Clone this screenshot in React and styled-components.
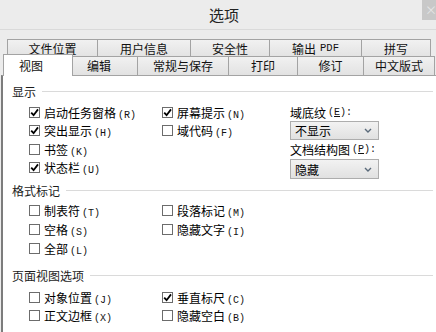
import React from "react";
import styled, { createGlobalStyle } from "styled-components";

const GlobalStyle = createGlobalStyle`
  html, body {
    margin: 0;
    padding: 0;
    background: #fff;
  }
  body {
    font-family: "Noto Sans CJK SC", "Liberation Sans", sans-serif;
  }
`;

const Window = styled.div`
  width: 436px;
  height: 332px;
  overflow: hidden;
  background: #ececec;
  display: flex;
  flex-direction: column;
  font-size: 12px;
  color: #000;
`;

const TitleBar = styled.div`
  height: 29px;
  flex: none;
  display: flex;
  align-items: flex-start;
  border-bottom: 1px solid #dadada;
`;

const Title = styled.div`
  flex: 1;
  padding-left: 26px;
  text-align: center;
  line-height: 29px;
  font-size: 15px;
  color: #222;
`;

const CloseBtn = styled.div`
  width: 14px;
  height: 20px;
  background: #c8c8c8;
  color: #e6e6e6;
  font-size: 12px;
  line-height: 20px;
  text-indent: 3px;
  overflow: hidden;
`;

const TabArea = styled.div`
  flex: none;
  padding-top: 9px;
  display: flex;
  flex-direction: column;
`;

const TabRow = styled.div`
  display: flex;
  height: ${(p) => p.$height}px;
  padding-left: ${(p) => p.$indent}px;
  margin-top: ${(p) => p.$top || 0}px;
`;

const Tab = styled.div`
  box-sizing: border-box;
  width: ${(p) => p.$width}px;
  display: flex;
  align-items: center;
  justify-content: center;
  padding-right: ${(p) => p.$shift || 0}px;
  border: 1px solid #a3a3a3;
  border-right: none;
  border-bottom: none;
  background: linear-gradient(#f1f1f1, #e2e2e2);
  font-size: 12px;
  line-height: 1;
  color: #111;

  &:last-child {
    border-right: 1px solid #a3a3a3;
  }

  ${(p) =>
    p.$active &&
    `
    position: relative;
    z-index: 2;
    margin-top: -2px;
    margin-bottom: -1px;
    background: #fff;
    border-right: 1px solid #a3a3a3;
    margin-right: -1px;
  `}
`;

const Latin = styled.span`
  font-family: "Liberation Mono", monospace;
  font-size: 10.5px;
  margin-left: 4px;
`;

const Panel = styled.div`
  flex: 1;
  margin-left: 1px;
  background: #fff;
  border-top: 1px solid #a3a3a3;
  border-left: 2px solid #7c7c7c;
  padding: 7px 3px 0 9px;
`;

const GroupHeader = styled.div`
  display: flex;
  align-items: center;
  gap: 6px;
  height: 16px;
  margin-top: ${(p) => p.$top || 0}px;
  color: #1c1c1c;
  font-size: 12px;
`;

const Rule = styled.div`
  flex: 1;
  height: 1px;
  background: #dadada;
`;

const Columns = styled.div`
  display: flex;
  margin-left: 17px;
  margin-top: ${(p) => p.$top}px;
`;

const Column = styled.div`
  width: ${(p) => (p.$width ? `${p.$width}px` : "auto")};
  flex: ${(p) => (p.$width ? "none" : 1)};
  display: flex;
  flex-direction: column;
`;

const CheckRow = styled.div`
  display: flex;
  align-items: center;
  gap: 4px;
  height: ${(p) => p.$height}px;
  white-space: nowrap;
  font-size: 12px;
`;

const Box = styled.div`
  box-sizing: border-box;
  width: 11px;
  height: 11px;
  border: 1px solid #6c6c6c;
  background: #fff;
  display: flex;
  align-items: center;
  justify-content: center;
`;

const Key = styled.span`
  font-family: "Liberation Mono", monospace;
  font-size: 10px;
  margin-left: 2px;
  color: #111;

  u {
    text-decoration: underline;
  }
`;

const FieldLabel = styled.div`
  height: ${(p) => p.$height}px;
  display: flex;
  align-items: center;
  white-space: nowrap;
`;

const Select = styled.div`
  box-sizing: border-box;
  width: 89px;
  height: ${(p) => p.$height}px;
  border: 1px solid #adadad;
  background: linear-gradient(#f2f2f2, #e1e1e1);
  display: flex;
  align-items: center;
  justify-content: space-between;
  padding: 0 6px 0 4px;
`;

const Check = () => (
  <svg width="9" height="9" viewBox="0 0 9 9">
    <path d="M1.2 4.6 L3.6 7.2 L8 1.4" fill="none" stroke="#000" strokeWidth="1.8" />
  </svg>
);

const Chevron = () => (
  <svg width="8" height="5" viewBox="0 0 8 5">
    <path d="M1 1 L4 4 L7 1" fill="none" stroke="#5a6a7a" strokeWidth="1.4" />
  </svg>
);

const Option = ({ label, k, checked, height }) => (
  <CheckRow $height={height}>
    <Box>{checked && <Check />}</Box>
    <span>
      {label}
      <Key>({k})</Key>
    </span>
  </CheckRow>
);

const row1 = [
  { label: "文件位置", w: 90 },
  { label: "用户信息", w: 93 },
  { label: "安全性", w: 79 },
  { label: "输出", latin: "PDF", w: 92 },
  { label: "拼写", w: 70 },
];

const row2 = [
  { label: "视图", w: 70, active: true, shift: 14 },
  { label: "编辑", w: 65, shift: 12 },
  { label: "常规与保存", w: 91 },
  { label: "打印", w: 69 },
  { label: "修订", w: 66 },
  { label: "中文版式", w: 72 },
];

const groups = [
  {
    title: "显示",
    top: 0,
    gridTop: 4,
    rowH: 18.5,
    cols: [
      [
        { label: "启动任务窗格", k: "R", checked: true },
        { label: "突出显示", k: "H", checked: true },
        { label: "书签", k: "K" },
        { label: "状态栏", k: "U", checked: true },
      ],
      [
        { label: "屏幕提示", k: "N", checked: true },
        { label: "域代码", k: "F" },
      ],
    ],
    fields: true,
  },
  {
    title: "格式标记",
    top: 3,
    gridTop: 2.5,
    rowH: 19,
    cols: [
      [
        { label: "制表符", k: "T" },
        { label: "空格", k: "S" },
        { label: "全部", k: "L" },
      ],
      [
        { label: "段落标记", k: "M" },
        { label: "隐藏文字", k: "I" },
      ],
    ],
  },
  {
    title: "页面视图选项",
    top: 9.5,
    gridTop: 5,
    rowH: 18,
    cols: [
      [
        { label: "对象位置", k: "J" },
        { label: "正文边框", k: "X" },
      ],
      [
        { label: "垂直标尺", k: "C", checked: true },
        { label: "隐藏空白", k: "B" },
      ],
    ],
  },
];

export default function App() {
  return (
    <>
      <GlobalStyle />
      <Window>
        <TitleBar>
          <Title>选项</Title>
          <CloseBtn>×</CloseBtn>
        </TitleBar>
        <TabArea>
          <TabRow $height={18} $indent={7}>
            {row1.map((t) => (
              <Tab key={t.label} $width={t.w}>
                {t.label}
                {t.latin && <Latin>{t.latin}</Latin>}
              </Tab>
            ))}
          </TabRow>
          <TabRow $height={19} $indent={3} $top={-1}>
            {row2.map((t) => (
              <Tab key={t.label} $width={t.w} $active={t.active} $shift={t.shift}>
                {t.label}
              </Tab>
            ))}
          </TabRow>
        </TabArea>
        <Panel>
          {groups.map((g) => (
            <React.Fragment key={g.title}>
              <GroupHeader $top={g.top}>
                {g.title}
                <Rule />
              </GroupHeader>
              <Columns $top={g.gridTop}>
                <Column $width={133}>
                  {g.cols[0].map((o) => (
                    <Option key={o.label} {...o} height={g.rowH} />
                  ))}
                </Column>
                <Column $width={128}>
                  {g.cols[1].map((o) => (
                    <Option key={o.label} {...o} height={g.rowH} />
                  ))}
                </Column>
                {g.fields && (
                  <Column>
                    <FieldLabel $height={18}>
                      域底纹
                      <Key>
                        (<u>E</u>):
                      </Key>
                    </FieldLabel>
                    <Select $height={19}>
                      不显示
                      <Chevron />
                    </Select>
                    <FieldLabel $height={19}>
                      文档结构图
                      <Key>
                        (<u>P</u>):
                      </Key>
                    </FieldLabel>
                    <Select $height={20}>
                      隐藏
                      <Chevron />
                    </Select>
                  </Column>
                )}
              </Columns>
            </React.Fragment>
          ))}
        </Panel>
      </Window>
    </>
  );
}
